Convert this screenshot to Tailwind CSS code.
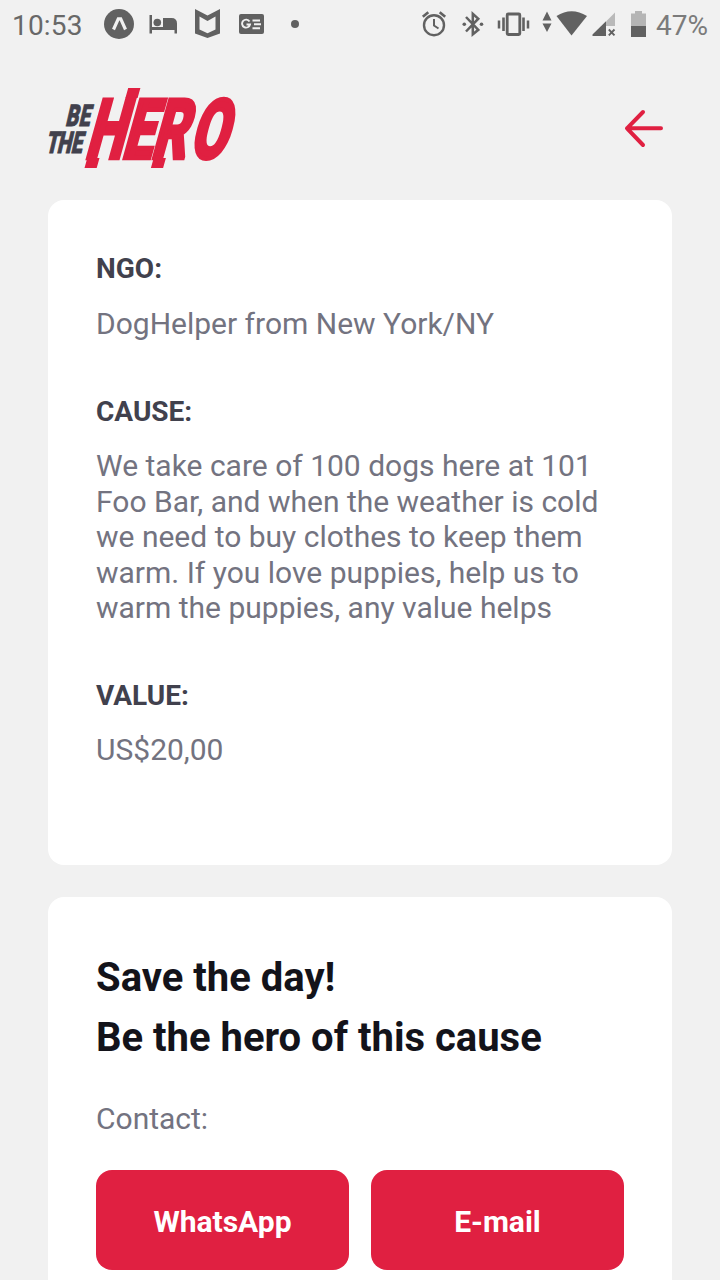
<!DOCTYPE html>
<html lang="en">
<head>
<meta charset="utf-8">
<title>Be The Hero</title>
<script src="https://cdn.jsdelivr.net/npm/@tailwindcss/browser@4"></script>
</head>
<body class="bg-[#f1f1f1] font-['Roboto',sans-serif]">
<div class="flex h-[1280px] w-[720px] flex-col overflow-hidden">
  <header class="flex h-[50px] shrink-0 items-center pl-3 pr-3 text-[28px] leading-[50px] text-[#686868]">
    <span class="w-[92px] shrink-0 pt-0.5 tracking-[0.2px]">10:53</span>
    <svg class="h-[50px] w-[206px] shrink-0" viewBox="104 0 206 50" fill="#616161">
      <circle cx="119" cy="24" r="15"/>
      <path d="M113.500 29.500 118.300 18.800h2.400L125.500 29.500" fill="none" stroke="#f1f1f1" stroke-width="3.200"/>
      <path d="M149.500 15h2.500v12h11v-9h8.500q5.500 0 5.500 5.500V33.500h-2.500v-3.500h-22.500v3.500h-2.500z"/>
      <circle cx="157.300" cy="22.500" r="3.800"/>
      <path d="M195 9 207.500 15.500 220 9V33.500L207.500 38 195 33.500zM199.500 16.500V29.500L207.500 33.300 215.500 29.500V16.500L207.500 21z" fill-rule="evenodd"/>
      <rect x="239" y="14" width="25" height="20" rx="2"/>
      <path d="M249.500 21.500A4 4 0 1 0 250 24.500H246.500M252.500 20.500H260M254 24.300H261M252.500 28.200H260" fill="none" stroke="#f1f1f1" stroke-width="1.900"/>
      <circle cx="295" cy="24" r="4"/>
    </svg>
    <svg class="ml-auto h-[50px] w-[230px] shrink-0" viewBox="420 0 230 50" fill="#616161">
      <g fill="none" stroke="#616161">
        <circle cx="434" cy="25.200" r="10" stroke-width="2.400"/>
        <path d="M434 19v6.500l4.500 3" stroke-width="2"/>
        <path d="M422.800 16.800 428.300 12.300M445.200 16.800 439.700 12.300" stroke-width="2.600"/>
        <path d="M466 17 478.300 29.800 472.800 34.300V13.800L478.300 18.700 466 31.500" stroke-width="2.500"/>
        <rect x="507.200" y="14" width="12.600" height="20.500" rx="1" stroke-width="2.800"/>
        <path d="M503.500 17.500v13.500M523.500 17.500v13.500" stroke-width="2.600"/>
        <path d="M499 20.500v8M528 20.500v8" stroke-width="2.500"/>
      </g>
      <circle cx="464.300" cy="24.300" r="1.800"/><circle cx="481.500" cy="24.300" r="1.800"/>
      <path d="M542.500 20.500 547 11.500 551.500 20.500zM542.500 23.500 547 32 551.500 23.500z"/>
      <path d="M556.500 16Q571.500 6.500 587 16L571.500 35.500z"/>
      <path d="M615 12.500V26H606V21.500z" fill="#b9b9b9"/>
      <path d="M606 21.300V36H592.500V34.500z"/>
      <path d="M608.800 29.500 614.500 35.300M614.500 29.500 608.800 35.300" stroke="#616161" stroke-width="1.900"/>
      <path d="M631 13.500h4V11h7v2.500h4V26h-15z" fill="#b5b5b5"/>
      <path d="M631 26h15v11h-15z"/>
    </svg>
    <span class="ml-[6px] shrink-0 pt-0.5 text-[#7b7b7b]">47%</span>
  </header>

  <div class="flex h-[150px] shrink-0 items-start justify-between pl-9 pr-12 pt-[34px]">
    <svg class="h-[88px] w-[212px] overflow-visible" viewBox="36 84 212 88" aria-label="Be The Hero">
      <g font-family="Roboto" font-weight="900" fill="#41414d" stroke="#41414d" stroke-width="1">
        <text transform="translate(65 126) skewX(-13) scale(.66 1)" x="0 20" font-size="30">BE</text>
        <text transform="translate(45 152.800) skewX(-13) scale(.66 1)" x="0 17.500 38.500" font-size="30">THE</text>
      </g>
      <g fill="#e02041">
        <text transform="translate(84.500 157.500) skewX(-15.500) scale(.65 1)" x="-.5 56 101 160" font-family="Roboto" font-weight="800" font-size="82" stroke="#e02041" stroke-width="4.500">HERO</text>
        <path d="M87.300 158h12.200L96.700 168H84.500zM128.200 88h12.200l-2.800 10h-12.200zM153.700 158h12.200L163.100 168h-12.200z"/>
      </g>
    </svg>
    <svg class="mt-[20px] mr-[4px] h-12 w-12" viewBox="0 0 24 24" fill="none" stroke="#e02041" stroke-width="2" stroke-linecap="round" stroke-linejoin="round">
      <path d="M20.500 12.150H3.500M11.500 20.500 3.500 12.150 11.500 4"/>
    </svg>
  </div>

  <main class="flex flex-col gap-8 px-12">
    <section class="h-[665px] rounded-2xl bg-white px-12 pt-[49px] text-[30px] leading-[35.4px] text-[#737380]">
      <h2 class="text-[28px] font-bold leading-10 text-[#41414d]">NGO:</h2>
      <p class="mt-[17px]">DogHelper from New York/NY</p>
      <h2 class="mt-[51px] text-[28px] font-bold leading-10 text-[#41414d]">CAUSE:</h2>
      <p class="mt-4 whitespace-nowrap">We take care of 100 dogs here at 101<br>Foo Bar, and when the weather is cold<br>we need to buy clothes to keep them<br>warm. If you love puppies, help us to<br>warm the puppies, any value helps</p>
      <h2 class="mt-[51px] text-[28px] font-bold leading-10 text-[#41414d]">VALUE:</h2>
      <p class="mt-4">US$20,00</p>
    </section>
    <section class="h-[420px] rounded-2xl bg-white px-12 pt-[51px]">
      <h1 class="text-[40px] font-bold leading-[60px] text-[#13131a]">Save the day!<br>Be the hero of this cause</h1>
      <p class="mt-[33px] text-[30px] leading-[35px] text-[#737380]">Contact:</p>
      <div class="mt-[34px] grid grid-cols-2 gap-[22px]">
        <button class="h-[100px] rounded-2xl bg-[#e02041] pt-0.5 text-[30px] font-bold text-white">WhatsApp</button>
        <button class="h-[100px] rounded-2xl bg-[#e02041] pt-0.5 text-[30px] font-bold text-white">E-mail</button>
      </div>
    </section>
  </main>
</div>
</body>
</html>
